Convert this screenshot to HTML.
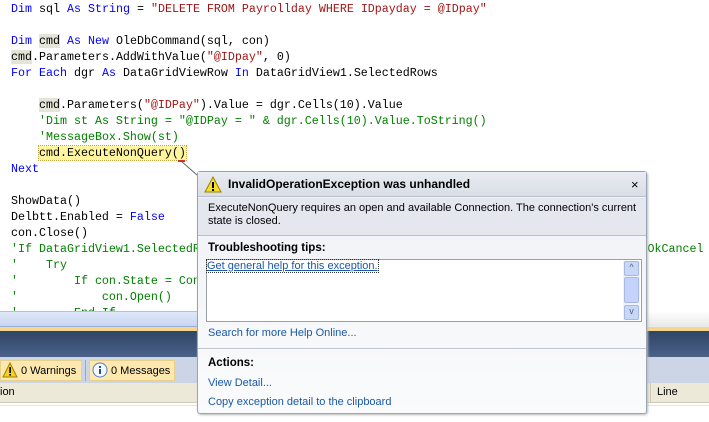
<!DOCTYPE html>
<html><head><meta charset="utf-8"><style>
*{margin:0;padding:0;box-sizing:border-box}
body{width:709px;height:422px;overflow:hidden;background:#fff;position:relative;font-family:"Liberation Sans",sans-serif}
.code{position:absolute;left:11px;top:1px;font-family:"Liberation Mono",monospace;font-size:11.67px;line-height:16px;white-space:pre;color:#000}
.k{color:#0000ff}.s{color:#a31515}.c{color:#008000}
.h{background:#e4e4d8}
.y{background:#fff5a0;outline:1px dotted #c8a040}
.abs{position:absolute}
.pop{position:absolute;left:197px;top:171px;width:450px;height:243px;border:1px solid #9aa3b0;border-radius:3px;background:linear-gradient(#eef1f5,#f6f7f9 60%,#fafbfc);box-shadow:1px 1px 2px #bbb;font-size:11px}
.lnk{color:#1a58a8}
</style></head><body>
<div class="code"><span class="k">Dim</span> sql <span class="k">As</span> <span class="k">String</span> = <span class="s">"DELETE FROM Payrollday WHERE IDpayday = @IDpay"</span>

<span class="k">Dim</span> <span class="h">cmd</span> <span class="k">As</span> <span class="k">New</span> OleDbCommand(sql, con)
<span class="h">cmd</span>.Parameters.AddWithValue(<span class="s">"@IDpay"</span>, 0)
<span class="k">For</span> <span class="k">Each</span> dgr <span class="k">As</span> DataGridViewRow <span class="k">In</span> DataGridView1.SelectedRows

    <span class="h">cmd</span>.Parameters(<span class="s">"@IDPay"</span>).Value = dgr.Cells(10).Value
    <span class="c">'Dim st As String = "@IDPay = " &amp; dgr.Cells(10).Value.ToString()</span>
    <span class="c">'MessageBox.Show(st)</span>
    <span class="y">cmd.ExecuteNonQuery()</span>
<span class="k">Next</span>

ShowData()
Delbtt.Enabled = <span class="k">False</span>
con.Close()
<span class="c">'If DataGridView1.SelectedRows.Count &gt; 0 AndAlso MessageBox.Show("....", MessageBoxButtons.OkCancel</span>
<span class="c">'    Try</span>
<span class="c">'        If con.State = ConnectionState.Closed Then</span>
<span class="c">'            con.Open()</span>
<span class="c">'        End If</span></div>
<svg class="abs" style="left:178px;top:160px" width="22" height="20"><path d="M3 1 L19 15" stroke="#666" stroke-width="1" fill="none"/><rect x="0" y="0" width="7" height="2" fill="#d03030"/></svg>
<div class="abs" style="left:0;top:311px;width:709px;height:16px;background:linear-gradient(#dfe8fa,#c8d6f2);border-top:1px solid #b0c0e0;border-bottom:1px solid #9db0d8"></div>
<div class="abs" style="left:647px;top:311px;width:62px;height:16px;background:linear-gradient(#fff,#e8e8e8)"></div>
<div class="abs" style="left:0;top:327px;width:709px;height:4px;background:#f4d690"></div>
<div class="abs" style="left:0;top:331px;width:709px;height:26px;background:linear-gradient(#2f4566,#4a6189)"></div>
<div class="abs" style="left:0;top:357px;width:709px;height:26px;background:#ccd5e5"></div>
<div class="abs" style="left:0;top:360px;width:82px;height:21px;background:#fde9b0;border:1px solid #e8cf8a;font-size:11px;padding:4px 0 0 20px">0 Warnings</div>
<svg class="abs" style="left:2px;top:362px" width="16" height="16"><path d="M8 1 L15 15 L1 15 Z" fill="#f5d020" stroke="#a08000"/><rect x="7.3" y="5" width="1.6" height="6" fill="#000"/><rect x="7.3" y="12" width="1.6" height="1.6" fill="#000"/></svg>
<div class="abs" style="left:85px;top:360px;width:1px;height:21px;background:#9aa8c0"></div>
<div class="abs" style="left:89px;top:360px;width:86px;height:21px;background:#fde9b0;border:1px solid #e8cf8a;font-size:11px;padding:4px 0 0 21px">0 Messages</div>
<svg class="abs" style="left:92px;top:362px" width="16" height="16"><circle cx="8" cy="8" r="7" fill="#f4f8ff" stroke="#5080c0"/><rect x="7" y="7" width="2" height="5" fill="#2050a0"/><rect x="7" y="4" width="2" height="2" fill="#2050a0"/></svg>
<div class="abs" style="left:0;top:383px;width:709px;height:20px;background:#ece9d8;border-bottom:1px solid #cfcbb8;font-size:11px;padding:3px 0 0 0">ion</div>
<div class="abs" style="left:650px;top:383px;font-size:11px;padding:3px 0 0 6px;border-left:1px solid #cfcbb8;height:20px">Line</div>
<div class="abs" style="left:0;top:405px;width:709px;height:1px;background:#e4e4e4"></div>
<div class="pop">
 <div class="abs" style="left:0;top:0;width:448px;height:25px;background:linear-gradient(#e9ecf1,#d9dee6);border-bottom:1px solid #b8c0cc"></div>
 <svg class="abs" style="left:6px;top:4px" width="18" height="17"><path d="M9 1 L17 16 L1 16 Z" fill="#f7de2a" stroke="#9a8000"/><rect x="8" y="6" width="2" height="6" fill="#000"/><rect x="8" y="13" width="2" height="2" fill="#000"/></svg>
 <div class="abs" style="left:30px;top:5px;font-weight:bold;font-size:12px">InvalidOperationException was unhandled</div>
 <div class="abs" style="left:433px;top:5px;font-size:13px">×</div>
 <div class="abs" style="left:0;top:26px;width:448px;height:38px;background:#e4e8ee;border-bottom:1px solid #b8c0cc"></div>
 <div class="abs" style="left:10px;top:30px;width:432px;line-height:13px">ExecuteNonQuery requires an open and available Connection. The connection's current state is closed.</div>
 <div class="abs" style="left:10px;top:70px;font-weight:bold;font-size:11.5px">Troubleshooting tips:</div>
 <div class="abs" style="left:8px;top:87px;width:436px;height:63px;background:#fff;border:1px solid #9aa0a8"></div>
 <div class="abs lnk" style="left:9px;top:88px;text-decoration:underline;outline:1px dotted #333">Get general help for this exception.</div>
 <div class="abs" style="left:425px;top:89px;width:17px;height:59px;background:#eef2fb"></div>
 <div class="abs" style="left:426px;top:89px;width:15px;height:15px;background:#c8d6f8;border:1px solid #a8b8e0;border-radius:2px;font-size:9px;color:#4d6185;text-align:center">^</div>
 <div class="abs" style="left:426px;top:105px;width:15px;height:26px;background:#c3d3fb;border:1px solid #a8b8e0;border-radius:2px"></div>
 <div class="abs" style="left:426px;top:133px;width:15px;height:15px;background:#c8d6f8;border:1px solid #a8b8e0;border-radius:2px;font-size:9px;color:#4d6185;text-align:center">v</div>
 <div class="abs lnk" style="left:10px;top:155px">Search for more Help Online...</div>
 <div class="abs" style="left:0;top:176px;width:448px;height:1px;background:#c0c6d0"></div>
 <div class="abs" style="left:10px;top:185px;font-weight:bold;font-size:11.5px">Actions:</div>
 <div class="abs lnk" style="left:10px;top:205px">View Detail...</div>
 <div class="abs lnk" style="left:10px;top:224px">Copy exception detail to the clipboard</div>
</div>
</body></html>
